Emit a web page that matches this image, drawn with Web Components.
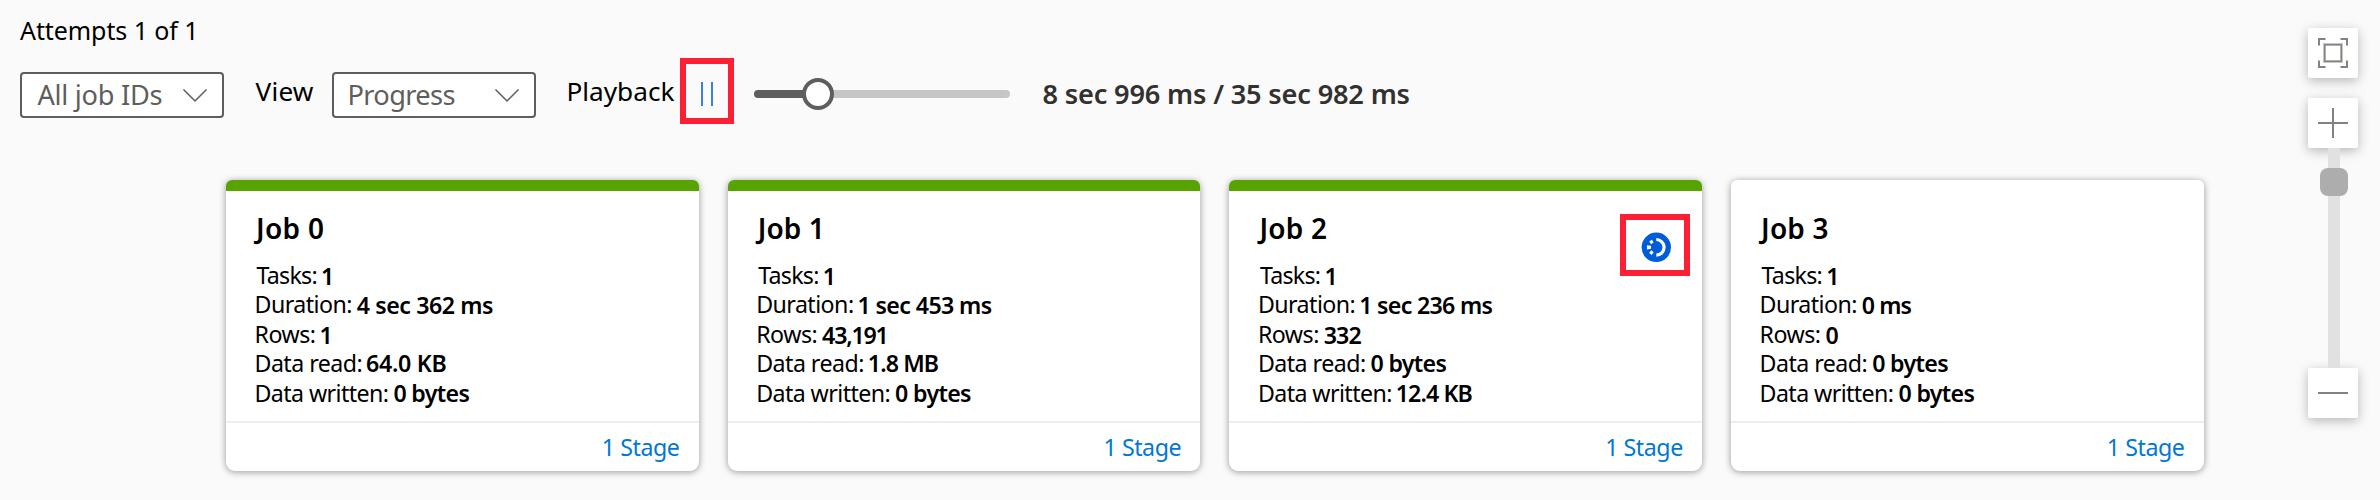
<!DOCTYPE html>
<html lang="en">
<head>
<meta charset="utf-8">
<title>Job graph playback</title>
<style>
html,body{margin:0;background:#fafafa;height:500px;overflow:hidden;font-family:"Noto Sans","Open Sans",sans-serif;color:#000}
</style>
</head>
<body>
<job-graph></job-graph>
<script>
const pen = document.createElement('canvas').getContext('2d');

/* One line of text whose box is the ink width given in "w", tracked to fill it. */
class FitText extends HTMLElement {
  connectedCallback() {
    const a = n => this.getAttribute(n);
    const text = this.textContent, w = +a('w'), size = +a('size'), weight = a('weight') || 400;
    pen.font = `${weight} ${size}px "Noto Sans"`;
    const m = pen.measureText(text);
    const ink = m.actualBoundingBoxRight + m.actualBoundingBoxLeft;
    const track = text.length > 1 ? (w - ink) / (text.length - 1) : 0;
    const root = this.attachShadow({mode: 'open'});
    root.innerHTML = `<style>
      :host{display:block;flex:none;width:${w}px;height:${a('h') || 30}px;line-height:${a('h') || 30}px;white-space:pre;font-size:${size}px;font-weight:${weight}}
      span{display:block;width:max-content;margin-left:${m.actualBoundingBoxLeft}px;letter-spacing:${track.toFixed(3)}px}
    </style><span><slot></slot></span>`;
  }
}

class DropDown extends HTMLElement {
  connectedCallback() {
    this.attachShadow({mode: 'open'}).innerHTML = `<style>
      :host{display:flex;box-sizing:border-box;width:204px;height:46px;border:2px solid #605e5c;border-radius:4px;background:#fff;color:#605e5c;padding:0 14px 0 15.5px;align-items:center;justify-content:space-between}
      svg{display:block;width:26px;height:16px}
    </style><slot></slot>
    <svg viewBox="0 0 26 16"><path d="M1.5 2.5L13 14L24.5 2.5" fill="none" stroke="#605e5c" stroke-width="1.5"/></svg>`;
  }
}

class PauseButton extends HTMLElement {
  connectedCallback() {
    this.attachShadow({mode: 'open'}).innerHTML = `<style>
      :host{display:flex;box-sizing:border-box;width:54px;height:66px;border:6px solid #fd2035;align-items:center;justify-content:center;gap:8px;padding:6px 0 0 6px;padding-left:0}
      i{width:2px;height:24px;background:#3b80db}
    </style><i></i><i></i>`;
  }
}

class PlaySlider extends HTMLElement {
  connectedCallback() {
    this.attachShadow({mode: 'open'}).innerHTML = `<style>
      :host{display:flex;width:256px;height:32px;align-items:center}
      .done{width:50px;height:8px;background:#605e5c;border-radius:4px 0 0 4px;margin-right:-2px}
      .thumb{box-sizing:border-box;width:32px;height:32px;border:4px solid #605e5c;border-radius:50%;background:#fff;position:relative}
      .rest{flex:1;height:8px;background:#c8c6c4;border-radius:0 4px 4px 0;margin-left:-2px}
    </style><div class="done"></div><div class="thumb"></div><div class="rest"></div>`;
  }
}

class StatRow extends HTMLElement {
  connectedCallback() {
    const a = n => this.getAttribute(n);
    this.attachShadow({mode: 'open'}).innerHTML = `<style>
      :host{display:flex;height:29.4px;gap:5.6px}
      .v{padding-top:${a('drop') || 0}px}
    </style><fit-text size="23.2" w="${a('lw')}" h="29">${a('label')}</fit-text>
    <fit-text class="v" size="23.2" weight="600" w="${a('vw')}" h="29">${a('value')}</fit-text>`;
  }
}

class RunningBadge extends HTMLElement {
  connectedCallback() {
    this.attachShadow({mode: 'open'}).innerHTML = `<style>
      :host{display:block;box-sizing:border-box;width:70px;height:62px;border:6px solid #fd2035}
      svg{display:block;width:58px;height:50px}
    </style><svg viewBox="1626 220 58 50"><circle cx="1656.3" cy="247.3" r="14.7" fill="#015cda"/>
      <path d="M1656.3 239.5A7.8 7.8 0 0 1 1656.3 255.1" fill="none" stroke="#fff" stroke-width="3.2"/>
      <g fill="#fff"><path d="M1649.2 241.5l2.6-1.8 1.8 2.6-2.4 2z"/><path d="M1647 245.2l4 .6v3l-4 .6z"/><path d="M1649.2 253.1l2.6 1.8 1.8-2.6-2.4-2z"/></g></svg>`;
  }
}

class JobCard extends HTMLElement {
  connectedCallback() {
    const d = JSON.parse(this.getAttribute('data'));
    const labels = [['Tasks:', 60, 1], ['Duration:', 94.7, 1], ['Rows:', 58.3, 1], ['Data read:', 105, 0], ['Data written:', 131.3, 0]];
    this.attachShadow({mode: 'open'}).innerHTML = `<style>
      :host{display:flex;flex-direction:column;box-sizing:border-box;width:472.6px;height:291px;background:#fff;border-radius:6px 6px 9px 9px;box-shadow:0 1px 7px rgba(0,0,0,.4);position:relative}
      .bar{height:11px;border-radius:6px 6px 0 0;background:${d.done ? '#57a300' : 'transparent'}}
      .body{flex:1;padding:20px 0 0 27px}
      .stats{padding:16px 0 0 3.5px}
      .foot{height:50px;border-top:2px solid #ededed;display:flex;justify-content:flex-end;padding:7.5px 19.8px 0 0;box-sizing:border-box;color:#0078d4}
      running-badge{position:absolute;right:12px;top:34px}
    </style>
    <div class="bar"></div>
    <div class="body"><fit-text size="28" weight="600" w="${d.w}" h="34">${d.name}</fit-text>
    <div class="stats">${labels.map(([l, w, drop], i) => `<stat-row label="${l}" lw="${w}" drop="${drop}" value="${d.v[i][0]}" vw="${d.v[i][1]}"></stat-row>`).join('')}</div></div>
    <div class="foot"><fit-text size="23.2" w="75" h="32">1 Stage</fit-text></div>
    ${d.running ? '<running-badge></running-badge>' : ''}`;
  }
}

class ZoomControl extends HTMLElement {
  connectedCallback() {
    this.attachShadow({mode: 'open'}).innerHTML = `<style>
      :host{display:flex;flex-direction:column;align-items:center;width:50px}
      .b{width:50px;height:50px;background:#fff;border-radius:2px;box-shadow:0 3px 12px rgba(0,0,0,.27)}
      .fit{margin-bottom:20px}
      svg{display:block}
      .track{width:12px;height:220px;background:#e1e1e1;display:flex;justify-content:center;margin-left:2px;position:relative}
      .knob{flex:none;width:28px;height:28px;border-radius:8px;background:#adadad;margin-top:20px}
    </style>
    <div class="b fit"><svg width="50" height="50" fill="none" stroke="#848280" stroke-width="2"><path d="M11 17.500V11H17.500M32.500 11H39V17.500M39 32.500V39H32.500M17.500 39H11V32.500"/><rect x="16.500" y="16.500" width="17" height="17" stroke="#c8c7c0" stroke-width="3"/><rect x="16.700" y="16.700" width="16.600" height="16.600" stroke-width="1.300"/></svg></div>
    <div class="b"><svg width="50" height="50" stroke="#848280" stroke-width="2"><path d="M10 25H40M25 10V40"/></svg></div>
    <div class="track"><div class="knob"></div></div>
    <div class="b"><svg width="50" height="50" stroke="#848280" stroke-width="2"><path d="M10 25H40"/></svg></div>`;
  }
}

class JobGraph extends HTMLElement {
  connectedCallback() {
    const jobs = [
      {name: 'Job 0', w: 70, done: 1, v: [['1', 8], ['4 sec 362 ms', 136.3], ['1', 8], ['64.0 KB', 79.3], ['0 bytes', 76]]},
      {name: 'Job 1', w: 65, done: 1, v: [['1', 8], ['1 sec 453 ms', 133.3], ['43,191', 63.5], ['1.8 MB', 70], ['0 bytes', 76]]},
      {name: 'Job 2', w: 69.5, done: 1, running: 1, v: [['1', 8], ['1 sec 236 ms', 132.3], ['332', 37.7], ['0 bytes', 76], ['12.4 KB', 75.7]]},
      {name: 'Job 3', w: 69.5, v: [['1', 8], ['0 ms', 49.7], ['0', 12], ['0 bytes', 76], ['0 bytes', 76]]}
    ];
    this.attachShadow({mode: 'open'}).innerHTML = `<style>
      :host{display:flex;width:2380px;height:500px;overflow:hidden}
      main{width:2308px;flex:none}
      .attempts{padding:15px 0 0 20px;height:43px;box-sizing:content-box}
      .tools{display:flex;height:66px;align-items:center}
      .tools>*{flex:none}
      .jobs{display:flex;gap:29.1px;padding:56px 0 0 226px}
      zoom-control{padding-top:28px}
    </style>
    <main>
      <div class="attempts"><fit-text size="25" w="173.3">Attempts 1 of 1</fit-text></div>
      <div class="tools">
        <drop-down style="margin:8px 0 0 20px"><fit-text size="27.2" w="124" h="36">All job IDs</fit-text></drop-down>
        <fit-text style="margin:0 0 0 31.6px" size="26.2" w="58.2" h="36">View</fit-text>
        <drop-down style="margin:8px 0 0 18.2px"><fit-text size="27.2" w="105" h="36">Progress</fit-text></drop-down>
        <fit-text style="margin:0 0 0 32.5px" size="26.2" w="106" h="36">Playback</fit-text>
        <pause-button style="margin-left:5.5px"></pause-button>
        <play-slider style="margin:6px 0 0 20px"></play-slider>
        <fit-text style="margin:5px 0 0 33.6px;color:#323130" size="27.2" weight="600" w="366" h="36">8 sec 996 ms / 35 sec 982 ms</fit-text>
      </div>
      <div class="jobs">${jobs.map(j => `<job-card data='${JSON.stringify(j)}'></job-card>`).join('')}</div>
    </main>
    <zoom-control></zoom-control>`;
  }
}

customElements.define('fit-text', FitText);
customElements.define('drop-down', DropDown);
customElements.define('pause-button', PauseButton);
customElements.define('play-slider', PlaySlider);
customElements.define('stat-row', StatRow);
customElements.define('running-badge', RunningBadge);
customElements.define('job-card', JobCard);
customElements.define('zoom-control', ZoomControl);
customElements.define('job-graph', JobGraph);
</script>
</body>
</html>
